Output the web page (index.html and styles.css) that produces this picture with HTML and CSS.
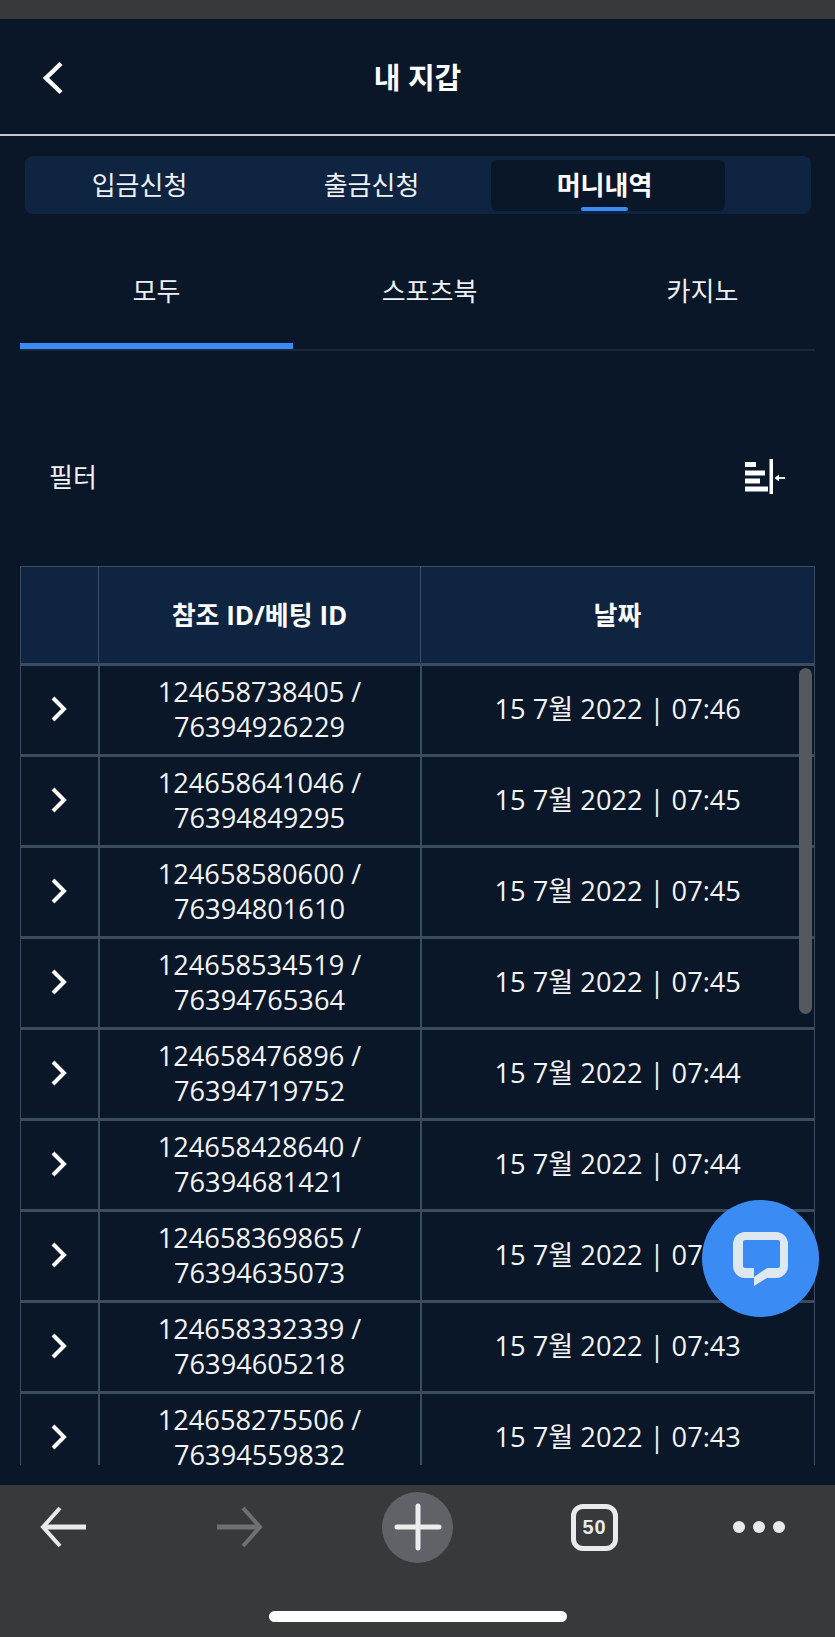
FILE: index.html
```html
<!DOCTYPE html>
<html lang="ko">
<head>
    <meta charset="UTF-8">
    <meta name="viewport" content="width=device-width, initial-scale=1.0">
    <title>내 지갑</title>
    <link rel="stylesheet" href="styles.css">
</head>
<body>
    <div class="top-strip"></div>
    <div class="page">
        <header class="header">
            <svg class="back" width="24" height="34" viewBox="0 0 24 34"><path d="M20 2.500 5 17l15 14.500" fill="none" stroke="#fff" stroke-width="4.5"/></svg>
            <h1>내 지갑</h1>
        </header>

        <div class="segment">
            <div class="segment-item">입금신청</div>
            <div class="segment-item">출금신청</div>
            <div class="segment-item active">머니내역</div>
        </div>

        <div class="subtabs">
            <div class="subtab active">모두</div>
            <div class="subtab">스포츠북</div>
            <div class="subtab">카지노</div>
        </div>

        <div class="filter">
            <span>필터</span>
            <svg width="40" height="38" viewBox="0 0 40 38">
                <rect x="0" y="3" width="11" height="5" fill="#fff"/>
                <rect x="0" y="11.500" width="20" height="5" fill="#fff"/>
                <rect x="0" y="19.500" width="15" height="5" fill="#fff"/>
                <rect x="0" y="27.500" width="23" height="5" fill="#fff"/>
                <rect x="24.500" y="0" width="3.500" height="35" fill="#fff"/>
                <path d="M33 19h7" fill="none" stroke="#fff" stroke-width="1.8"/>
                <path d="M29.500 19l4.500-3.500v7z" fill="#fff"/>
            </svg>
        </div>

        <div class="table-wrap">
            <table>
                <thead>
                    <tr><th class="col-arrow"></th><th class="col-id">참조 ID/베팅 ID</th><th>날짜</th></tr>
                </thead>
                <tbody id="rows"></tbody>
            </table>
            <div class="scrollbar"></div>
        </div>
    </div>

    <div class="chat">
        <svg width="55" height="54" viewBox="0 0 55 54"><path d="M12 0h31a12 12 0 0 1 12 12v22a12 12 0 0 1-12 12H34L21 54v-8h-9A12 12 0 0 1 0 34V12A12 12 0 0 1 12 0Z" fill="#dfe7f1"/><path d="M12 8h33a2 2 0 0 1 2 2v24a2 2 0 0 1-2 2H34L21 45v-9h-9a2 2 0 0 1-2-2V10a2 2 0 0 1 2-2Z" fill="#3b8bf4"/></svg>
    </div>

    <footer class="browser-bar">
        <div class="browser-icons">
            <svg width="48" height="42" viewBox="0 0 48 42"><path d="M47 21H5" fill="none" stroke="#e9eaec" stroke-width="5"/><path d="M21 2 4 21l17 19" fill="none" stroke="#e9eaec" stroke-width="4"/></svg>
            <svg class="forward" width="48" height="42" viewBox="0 0 48 42"><path d="M1 21h42" fill="none" stroke="#6f7072" stroke-width="5"/><path d="M27 2l17 19-17 19" fill="none" stroke="#6f7072" stroke-width="4"/></svg>
            <div class="plus">
                <svg width="48" height="48" viewBox="0 0 48 48"><path d="M24 3v42M3 24h42" fill="none" stroke="#eceded" stroke-width="5" stroke-linecap="round"/></svg>
            </div>
            <div class="tab-count">50</div>
            <div class="dots"><i></i><i></i><i></i></div>
        </div>
        <div class="home-bar"></div>
    </footer>

    <script>
        var rows = [
            ["124658738405", "76394926229", "07:46"],
            ["124658641046", "76394849295", "07:45"],
            ["124658580600", "76394801610", "07:45"],
            ["124658534519", "76394765364", "07:45"],
            ["124658476896", "76394719752", "07:44"],
            ["124658428640", "76394681421", "07:44"],
            ["124658369865", "76394635073", "07:44"],
            ["124658332339", "76394605218", "07:43"],
            ["124658275506", "76394559832", "07:43"]
        ];
        var html = "";
        rows.forEach(function(r) {
            html += '<tr><td><svg width="18" height="26" viewBox="0 0 18 26"><path d="M3 2l11 11L3 24" fill="none" stroke="#fff" stroke-width="4"/></svg></td>' +
                '<td>' + r[0] + ' /<br>' + r[1] + '</td>' +
                '<td>15 7월 2022 | ' + r[2] + '</td></tr>';
        });
        document.getElementById("rows").innerHTML = html;
    </script>
</body>
</html>
```

FILE: styles.css
```css
html, body {
    margin: 0;
    padding: 0;
}

body {
    position: relative;
    width: 835px;
    height: 1637px;
    overflow: hidden;
    display: flex;
    flex-direction: column;
    background-color: #0a1729;
    color: #fff;
    font-family: "Open Sans", "Noto Sans CJK KR", sans-serif;
    font-size: 26px;
}

.top-strip {
    height: 19px;
    background-color: #38393b;
}

.page {
    flex: 1;
    min-height: 0;
    display: flex;
    flex-direction: column;
}

.header {
    height: 113px;
    padding-bottom: 2px;
    border-bottom: 2px solid #c4c7ca;
    display: flex;
    align-items: center;
    justify-content: center;
    position: relative;
}

.header h1 {
    margin: 0;
    font-size: 29px;
    font-weight: 700;
}

.back {
    position: absolute;
    left: 41px;
    top: 42px;
}

.segment {
    margin: 20px 24px 0 25px;
    height: 58px;
    padding: 4px 0 3px;
    box-sizing: border-box;
    background-color: #0f2440;
    border-radius: 8px;
    display: flex;
}

.segment-item {
    width: 233px;
    padding: 0 6px 4px 0;
    box-sizing: border-box;
    display: flex;
    align-items: center;
    justify-content: center;
    position: relative;
    border-radius: 6px;
    color: #eef1f4;
}

.segment-item:first-child {
    padding-right: 4px;
}

.segment-item.active {
    width: 234px;
    padding-right: 7px;
    background-color: #0a1729;
    font-weight: 700;
    color: #fff;
}

.segment-item.active::after {
    content: "";
    position: absolute;
    left: 90px;
    bottom: 0;
    width: 47px;
    height: 4px;
    border-radius: 2px;
    background-color: #3b8bf4;
}

.subtabs {
    margin: 27px 20px 0;
    display: flex;
    border-bottom: 2px solid #1a2838;
}

.subtab {
    flex: 0 0 273px;
    height: 108px;
    padding-bottom: 4px;
    box-sizing: border-box;
    border-bottom: 6px solid transparent;
    display: flex;
    align-items: center;
    justify-content: center;
    color: #eef1f4;
}

.subtab.active {
    border-bottom-color: #3b8bf4;
}

.filter {
    margin: 107px 50px 0 49px;
    height: 40px;
    display: flex;
    align-items: center;
    justify-content: space-between;
    color: #f2f4f6;
}

.filter span {
    margin-top: -4px;
}

.table-wrap {
    margin: 68px 20px 0;
    height: 899px;
    position: relative;
    overflow: hidden;
}

table {
    width: 795px;
    table-layout: fixed;
    border-collapse: collapse;
}

th, td {
    border: 1px solid #3a4c60;
    text-align: center;
    padding: 0;
}

th {
    height: 94px;
    padding-bottom: 2px;
    background-color: #0f2440;
    font-weight: 700;
}

td {
    height: 85px;
    padding-bottom: 3px;
    font-size: 27.2px;
    line-height: 35px;
    border-width: 3px 2px;
    color: #f2f4f6;
}

td:first-child {
    border-left-width: 1px;
}

td:last-child {
    border-right-width: 1px;
}

td svg {
    display: block;
    margin: 0 auto;
}

.col-arrow {
    width: 77px;
}

.col-id {
    width: 321px;
}

.scrollbar {
    position: absolute;
    right: 3px;
    top: 102px;
    width: 13px;
    height: 346px;
    border-radius: 7px;
    background-color: #55585d;
}

.chat {
    position: absolute;
    left: 702px;
    top: 1200px;
    width: 117px;
    height: 117px;
    border-radius: 50%;
    background-color: #3b8bf4;
    display: flex;
    align-items: center;
    justify-content: center;
}

.browser-bar {
    height: 152px;
    flex-shrink: 0;
    background-color: #38393b;
}

.browser-icons {
    height: 84px;
    margin-bottom: 42px;
    padding-left: 39px;
    display: flex;
    align-items: center;
    gap: 118px;
}

.forward {
    margin-left: 11px;
}

.plus {
    width: 71px;
    height: 71px;
    border-radius: 50%;
    background-color: #5f6368;
    display: flex;
    align-items: center;
    justify-content: center;
}

.tab-count {
    width: 47px;
    height: 47px;
    box-sizing: border-box;
    border: 5px solid #e9eaec;
    border-radius: 12px;
    display: flex;
    align-items: center;
    justify-content: center;
    font-family: "Liberation Sans", sans-serif;
    font-size: 20px;
    letter-spacing: 1px;
    font-weight: 700;
    color: #e9eaec;
}

.dots {
    margin-left: -3px;
    display: flex;
    gap: 8px;
}

.dots i {
    width: 12px;
    height: 12px;
    border-radius: 50%;
    background-color: #e9eaec;
}

.home-bar {
    width: 298px;
    height: 11px;
    margin: 0 auto;
    border-radius: 6px;
    background-color: #fff;
}
```
